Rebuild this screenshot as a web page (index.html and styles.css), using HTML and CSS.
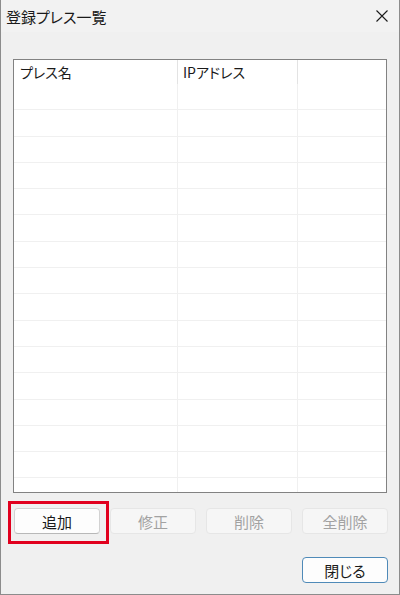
FILE: index.html
```html
<!DOCTYPE html>
<html lang="ja">
<head>
<meta charset="utf-8">
<link rel="stylesheet" href="styles.css">
</head>
<body>
<div class="window">
  <div class="titlebar">
    <span class="title">登録プレス一覧</span>
    <span class="close">
      <svg width="12" height="12" viewBox="0 0 12 12"><path d="M0.5 0.5 L11.5 11.5 M11.5 0.5 L0.5 11.5" stroke="#1a1a1a" stroke-width="1.1" fill="none"/></svg>
    </span>
  </div>
  <div class="listbox">
    <div class="row header">
      <div class="cell">プレス名</div>
      <div class="cell">IPアドレス</div>
      <div class="cell last"></div>
    </div>
    <div class="body">
      <div class="row"><div class="cell"></div><div class="cell"></div><div class="cell last"></div></div>
      <div class="row"><div class="cell"></div><div class="cell"></div><div class="cell last"></div></div>
      <div class="row"><div class="cell"></div><div class="cell"></div><div class="cell last"></div></div>
      <div class="row"><div class="cell"></div><div class="cell"></div><div class="cell last"></div></div>
      <div class="row"><div class="cell"></div><div class="cell"></div><div class="cell last"></div></div>
      <div class="row"><div class="cell"></div><div class="cell"></div><div class="cell last"></div></div>
      <div class="row"><div class="cell"></div><div class="cell"></div><div class="cell last"></div></div>
      <div class="row"><div class="cell"></div><div class="cell"></div><div class="cell last"></div></div>
      <div class="row"><div class="cell"></div><div class="cell"></div><div class="cell last"></div></div>
      <div class="row"><div class="cell"></div><div class="cell"></div><div class="cell last"></div></div>
      <div class="row"><div class="cell"></div><div class="cell"></div><div class="cell last"></div></div>
      <div class="row"><div class="cell"></div><div class="cell"></div><div class="cell last"></div></div>
      <div class="row"><div class="cell"></div><div class="cell"></div><div class="cell last"></div></div>
      <div class="row"><div class="cell"></div><div class="cell"></div><div class="cell last"></div></div>
      <div class="row"><div class="cell"></div><div class="cell"></div><div class="cell last"></div></div>
      <div class="row"><div class="cell"></div><div class="cell"></div><div class="cell last"></div></div>
    </div>
  </div>
  <div class="actions">
    <button class="btn primary-mark">追加<span class="highlight"></span></button>
    <button class="btn disabled">修正</button>
    <button class="btn disabled">削除</button>
    <button class="btn disabled">全削除</button>
  </div>
  <div class="footer">
    <button class="btn default">閉じる</button>
  </div>
</div>
</body>
</html>
```

FILE: styles.css
```css
* { box-sizing: border-box; }
html, body { margin: 0; padding: 0; }
body {
  width: 400px;
  height: 595px;
  overflow: hidden;
  font-family: "Noto Sans CJK JP", "Noto Sans", sans-serif;
  font-feature-settings: "palt";
  color: #1a1a1a;
  background: #ffffff;
}
.window {
  width: 400px;
  height: 595px;
  border: 1px solid #8c8c8c;
  border-top: none;
  background: #f0f0f0;
  display: flex;
  flex-direction: column;
}
.titlebar {
  height: 32px;
  display: flex;
  align-items: center;
  justify-content: space-between;
  padding-left: 5px;
  padding-right: 11px;
  background: #f2f2f2;
}
.title {
  font-size: 15px;
  line-height: 1;
  padding-top: 1px;
}
.close {
  display: flex;
  width: 12px;
  height: 12px;
}
.listbox {
  margin: 27px 0 0 12px;
  width: 374px;
  height: 434px;
  border: 1px solid #828282;
  background: #ffffff;
  overflow: hidden;
}
.row {
  display: grid;
  grid-template-columns: 164px 120px 1fr;
  height: 26.3px;
  border-bottom: 1px solid #f0f0f0;
}
.row .cell {
  border-right: 1px solid #f0f0f0;
}
.row .cell.last { border-right: none; }
.row.header {
  height: 24px;
  border-bottom: none;
}
.row.header .cell {
  border-right: 1px solid #e3e3e3;
  font-size: 14px;
  line-height: 24px;
  padding-left: 6px;
}
.row.header .cell:nth-child(2) { padding-left: 5px; }
.row.header .cell.last { border-right: none; }
.actions {
  display: flex;
  gap: 10px;
  margin: 15px 0 0 13px;
}
.btn {
  position: relative;
  width: 86px;
  height: 26px;
  font-family: inherit;
  font-feature-settings: "palt";
  font-size: 15px;
  line-height: 1;
  color: #1a1a1a;
  background: #fdfdfd;
  border: 1px solid #d2d2d2;
  border-bottom-color: #b8b8b8;
  border-radius: 4px;
  padding: 0;
  display: flex;
  align-items: center;
  justify-content: center;
}
.btn.disabled {
  background: #f6f6f6;
  border-color: #e6e6e6;
  color: #a2a2a2;
}
.highlight {
  position: absolute;
  left: -7px;
  top: -8px;
  width: 101px;
  height: 43px;
  border: 3px solid #e1001e;
}
.footer {
  display: flex;
  justify-content: flex-end;
  margin: 23px 11px 0 0;
}
.btn.default {
  border: 1px solid #4f8ab8;
  background: #fdfdfd;
}
```
